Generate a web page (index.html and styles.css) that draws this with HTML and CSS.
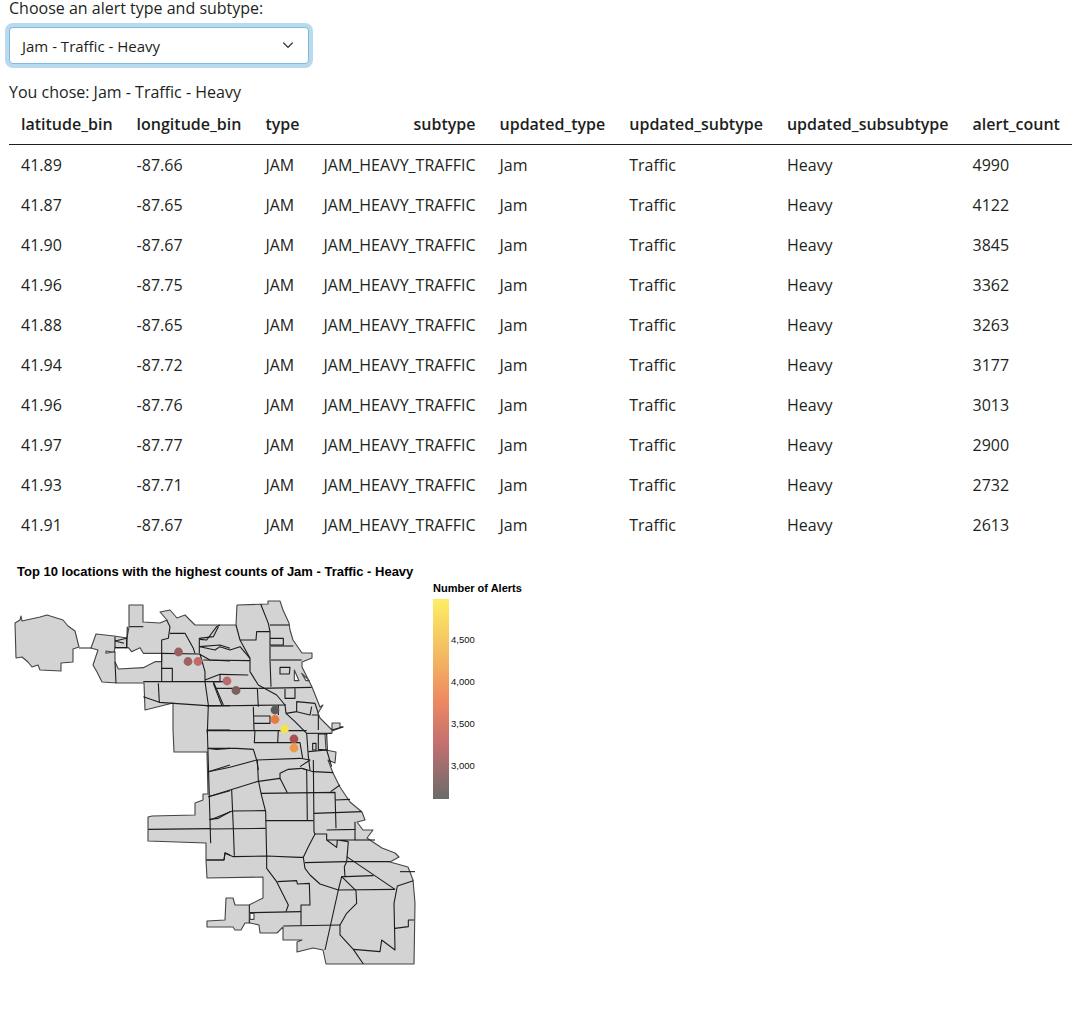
FILE: index.html
```html
<!DOCTYPE html>
<html lang="en">
<head>
<meta charset="utf-8">
<title>Alerts</title>
<link rel="stylesheet" href="styles.css">
</head>
<body>
<main class="page">
  <label class="field-label">Choose an alert type and subtype:</label>
  <div class="select">
    <span class="select-value">Jam - Traffic - Heavy</span>
    <svg class="chevron" width="10" height="7" viewBox="0 0 10 7"><path d="M.7 1 5 5.400 9.300 1"/></svg>
  </div>
  <p class="chosen">You chose: Jam - Traffic - Heavy</p>
  <table class="data">
    <thead>
      <tr><th>latitude_bin</th><th>longitude_bin</th><th>type</th><th class="right">subtype</th><th>updated_type</th><th>updated_subtype</th><th>updated_subsubtype</th><th>alert_count</th></tr>
    </thead>
    <tbody>
      <tr><td>41.89</td><td>-87.66</td><td>JAM</td><td>JAM_HEAVY_TRAFFIC</td><td>Jam</td><td>Traffic</td><td>Heavy</td><td>4990</td></tr>
      <tr><td>41.87</td><td>-87.65</td><td>JAM</td><td>JAM_HEAVY_TRAFFIC</td><td>Jam</td><td>Traffic</td><td>Heavy</td><td>4122</td></tr>
      <tr><td>41.90</td><td>-87.67</td><td>JAM</td><td>JAM_HEAVY_TRAFFIC</td><td>Jam</td><td>Traffic</td><td>Heavy</td><td>3845</td></tr>
      <tr><td>41.96</td><td>-87.75</td><td>JAM</td><td>JAM_HEAVY_TRAFFIC</td><td>Jam</td><td>Traffic</td><td>Heavy</td><td>3362</td></tr>
      <tr><td>41.88</td><td>-87.65</td><td>JAM</td><td>JAM_HEAVY_TRAFFIC</td><td>Jam</td><td>Traffic</td><td>Heavy</td><td>3263</td></tr>
      <tr><td>41.94</td><td>-87.72</td><td>JAM</td><td>JAM_HEAVY_TRAFFIC</td><td>Jam</td><td>Traffic</td><td>Heavy</td><td>3177</td></tr>
      <tr><td>41.96</td><td>-87.76</td><td>JAM</td><td>JAM_HEAVY_TRAFFIC</td><td>Jam</td><td>Traffic</td><td>Heavy</td><td>3013</td></tr>
      <tr><td>41.97</td><td>-87.77</td><td>JAM</td><td>JAM_HEAVY_TRAFFIC</td><td>Jam</td><td>Traffic</td><td>Heavy</td><td>2900</td></tr>
      <tr><td>41.93</td><td>-87.71</td><td>JAM</td><td>JAM_HEAVY_TRAFFIC</td><td>Jam</td><td>Traffic</td><td>Heavy</td><td>2732</td></tr>
      <tr><td>41.91</td><td>-87.67</td><td>JAM</td><td>JAM_HEAVY_TRAFFIC</td><td>Jam</td><td>Traffic</td><td>Heavy</td><td>2613</td></tr>
    </tbody>
  </table>
  <svg class="plot" width="530" height="430" viewBox="9 550 530 430">
    <defs>
      <linearGradient id="ramp" x1="0" y1="0" x2="0" y2="1">
        <stop offset="0" stop-color="#fdee65"/>
        <stop offset="0.25" stop-color="#f4bf62"/>
        <stop offset="0.5" stop-color="#ef8a62"/>
        <stop offset="0.72" stop-color="#c4706f"/>
        <stop offset="1" stop-color="#6b6b6b"/>
      </linearGradient>
    </defs>
    <text class="plot-title" x="17" y="576">Top 10 locations with the highest counts of Jam - Traffic - Heavy</text>

    <g class="map">
    <polygon class="area" points="15,623 20,620 21,616 22,621 40,617 47,615 63,620 68,626 75,631 79,647 73,649 73,662 61,663 61,671 40,670 38,665 32,667 28,662 22,657 16,658"/>
    <polyline class="edge" points="79,648 92,648"/>
    <polygon class="area" points="91,648 96,634 114,636 127,638 129,627 129,605 143,605 143,622 160,623 167,620 160,612 170,610 177,618 185,615 195,625 236,625 237,605 268,604 268,601 280,601 283,610 289,623 290,630 293,640 302,653 312,653 312,658 302,662 302,667 312,687 320,707 323,705 318,713 320,718 332,730 332,723 340,723 340,727 343,727 332,731 332,733 325,734 326,750 336,752 335,763 328,760 333,773 340,787 350,802 362,812 365,820 357,822 363,830 373,830 367,838 382,848 395,853 399,857 390,862 408,867 410,872 413,880 415,903 414,964 326,964 323,950 313,948 297,952 297,942 302,940 283,940 283,927 277,933 260,933 259,925 250,923 245,923 241,930 235,930 233,927 207,927 207,921 225,920 226,898 233,898 235,905 249,905 263,898 263,877 207,878 206,860 206,843 148,841 148,817 152,816 195,815 195,803 203,800 203,794 208,794 207,752 174,752 173,730 173,703 145,710 144,683 117,683 102,682 97,672 93,665 98,650"/>

    <g class="lines" transform="translate(0 555) scale(0.33333)">
      <polygon class="hole" points="318,295 345,290 345,320 355,342 430,338 465,320 485,320 485,295 430,295 420,278 395,290 385,278 345,278 342,292 318,288"/>
      <polyline points="388,215 430,215"/>
      <polyline points="382,215 380,280"/>
      <polyline points="345,245 345,278 380,278 380,250 345,258 372,265"/>
      <polyline points="345,320 348,385"/>
      <polyline points="500,195 510,215 505,250 485,255 485,380"/>
      <polyline points="510,235 530,235 555,235 580,280 585,295"/>
      <polyline points="598,295 598,250 640,245 655,215"/>
      <polyline points="598,275 660,270 690,280"/>
      <polyline points="485,295 598,297 630,315 690,318"/>
      <polyline points="600,297 615,350 615,380 625,450 622,535"/>
      <polyline points="485,340 517,340 517,380"/>
      <polyline points="430,380 690,380"/>
      <polyline points="430,425 478,442 620,452 690,452"/>
      <polyline points="475,385 478,442"/>
      <polyline points="620,525 690,525"/>
      <polyline points="640,385 665,450"/>
    </g>

    <g class="lines" transform="translate(200 590) scale(0.33333)">
      <polyline points="108,105 120,150 150,205 150,245 175,285 230,315 255,345 258,370 285,395 320,430 325,500 330,540"/>
      <polyline points="182,42 205,100 210,125 210,210 213,290"/>
      <polyline points="210,105 268,105"/>
      <polyline points="120,150 168,150 170,125 210,125"/>
      <polyline points="210,145 250,145 250,165 210,165"/>
      <polyline points="213,168 280,168"/>
      <polygon points="240,232 270,232 268,252 240,252"/>
      <polygon class="hole" points="283,240 297,272 283,272"/>
      <polygon class="hole" points="305,250 328,272 318,272"/>
      <polyline points="0,148 20,150 50,110 60,105"/>
      <polyline points="0,170 45,180 60,170 90,180 120,170 150,205"/>
      <polyline points="10,210 150,212"/>
      <polyline points="213,210 305,210"/>
      <polyline points="15,270 60,253 145,255"/>
      <polyline points="60,253 60,275 40,275 70,345"/>
      <polyline points="45,295 172,295 175,350"/>
      <polyline points="175,295 335,292"/>
      <polyline points="255,297 255,325 285,325 285,295"/>
      <polyline points="20,348 258,345"/>
      <polyline points="160,350 162,420"/>
      <polyline points="162,378 210,378 210,400 162,400"/>
      <polyline points="235,345 235,375"/>
      <polyline points="258,370 290,365 290,335 345,340 355,370"/>
      <polyline points="290,365 330,375 335,350"/>
      <polyline points="335,375 355,375 355,420"/>
      <polyline points="20,422 320,422"/>
      <polyline points="165,420 163,458 300,458 308,505"/>
      <polyline points="235,420 233,458"/>
      <polyline points="25,475 110,475 160,478 170,510 175,540"/>
      <polyline points="170,510 300,505 330,510 300,530"/>
      <polyline points="320,430 395,430"/>
      <polygon points="355,432 380,432 382,480 355,478"/>
      <polygon points="338,460 348,460 348,480 338,480"/>
      <polyline points="325,485 380,480 395,530"/>
      <polyline points="395,420 430,410"/>
    </g>

    <g class="lines" transform="translate(200 760) scale(0.33333)">
      <polyline points="25,35 90,22 170,0"/>
      <polyline points="172,0 175,60 183,100"/>
      <polyline points="25,110 170,65 240,55 262,98"/>
      <polyline points="240,55 240,40 265,28 305,25 320,30 322,180"/>
      <polyline points="340,0 342,215 345,222 325,260 310,292"/>
      <polyline points="305,25 340,35 400,38"/>
      <polyline points="183,100 405,97 408,205"/>
      <polyline points="342,160 485,155"/>
      <polyline points="405,120 450,118"/>
      <polyline points="392,95 420,75"/>
      <polyline points="197,182 340,182"/>
      <polyline points="183,100 197,155 200,290 200,325 230,365 265,435 258,455"/>
      <polyline points="95,90 100,205 103,287"/>
      <polyline points="30,180 97,153 197,152"/>
      <polyline points="30,207 197,205"/>
      <polyline points="18,300 72,300 75,280 100,290 200,288 300,292 310,292 315,325 330,345 360,372 415,390"/>
      <polyline points="315,308 438,305"/>
      <polyline points="380,210 465,208 465,185"/>
      <polyline points="465,208 465,240 380,240 410,262 412,240 445,245"/>
      <polyline points="345,222 380,222 380,240"/>
      <polyline points="465,240 525,240"/>
      <polyline points="445,245 440,305 433,320 435,350 425,350 415,390 375,570"/>
      <polyline points="440,290 585,388"/>
      <polyline points="440,305 570,305"/>
      <polyline points="435,350 520,347"/>
      <polyline points="425,350 468,392"/>
      <polyline points="415,390 585,388"/>
      <polyline points="468,392 470,430 440,460 420,495 420,525 460,568 490,612"/>
      <polyline points="460,568 540,575 545,540 585,570 582,430 592,378 640,362"/>
      <polyline points="585,505 625,500 625,480 642,480"/>
      <polyline points="600,335 645,335"/>
      <polyline points="232,365 290,362 292,372 328,370 330,435 303,435 303,495"/>
      <polyline points="150,458 303,455"/>
      <polyline points="148,435 148,490"/>
      <polyline points="250,498 420,495"/>
      <rect class="hole" x="150" y="460" width="12" height="18"/>
    </g>

    <g class="lines" transform="translate(0 730) scale(0.33333)">
      <polyline points="622,0 630,270 632,340"/>
      <polyline points="445,298 630,296"/>
      <polyline points="624,55 650,58 690,55"/>
      <polyline points="625,125 690,105"/>
      <polyline points="625,200 690,182"/>
      <polyline points="628,268 655,265 690,245"/>
      <polyline points="620,390 672,390 675,368 690,375"/>
    </g>

    <circle class="dot d1" cx="178.500" cy="652" r="4.400"/>
    <circle class="dot d2" cx="188" cy="661.500" r="4.400"/>
    <circle class="dot d3" cx="198" cy="661.500" r="4.400"/>
    <circle class="dot d4" cx="227" cy="681" r="4.400"/>
    <circle class="dot d5" cx="236" cy="690.500" r="4.400"/>
    <circle class="dot d6" cx="275" cy="710" r="4.400"/>
    <circle class="dot d7" cx="275" cy="719.500" r="4.400"/>
    <circle class="dot d8" cx="284.500" cy="729" r="4.400"/>
    <circle class="dot d9" cx="294" cy="739" r="4.400"/>
    <circle class="dot d10" cx="294" cy="748" r="4.400"/>
    </g>

    <text class="legend-title" x="433" y="592">Number of Alerts</text>
    <rect class="ramp" x="433" y="599" width="16" height="200"/>
    <text class="legend-label" x="451" y="642.500">4,500</text>
    <text class="legend-label" x="451" y="684.500">4,000</text>
    <text class="legend-label" x="451" y="726.500">3,500</text>
    <text class="legend-label" x="451" y="768.500">3,000</text>
  </svg>
</main>
</body>
</html>
```

FILE: styles.css
```css
html, body {
  margin: 0;
  padding: 0;
  background: #fff;
}

.page {
  margin-top: -4px;
  padding: 0 5px 0 9px;
  font-family: "Open Sans", sans-serif;
  font-size: 16px;
  line-height: 24px;
  color: #1d1f21;
}

.field-label {
  display: block;
}

.select {
  box-sizing: border-box;
  width: 300px;
  height: 37px;
  margin-top: 7px;
  padding: 0 15px 0 12px;
  display: flex;
  align-items: center;
  justify-content: space-between;
  background: #fff;
  border: 1px solid #86b7dd;
  border-radius: 4px;
  box-shadow: 0 0 0 4px #b9d9ef;
  font-size: 15px;
}

.chevron {
  fill: none;
  stroke: #343a40;
  stroke-width: 1.3;
  stroke-linecap: round;
  stroke-linejoin: round;
}

.chosen {
  margin: 16px 0 0;
}

.data {
  width: 1063px;
  border-collapse: collapse;
}

.data th {
  padding: 8px 12px;
  height: 24px;
  text-align: left;
  font-weight: 600;
  border-bottom: 1px solid #1d1f21;
  white-space: nowrap;
}

.data th.right {
  text-align: right;
}

.data td {
  padding: 8px 12px;
  height: 24px;
  white-space: nowrap;
}

.plot {
  display: block;
  margin-top: 5px;
}

.plot-title {
  font: bold 13px "Liberation Sans", sans-serif;
  fill: #000;
}

.legend-title {
  font: bold 11px "Liberation Sans", sans-serif;
  fill: #000;
}

.legend-label {
  font: 9.500px "Liberation Sans", sans-serif;
  fill: #111;
}

.ramp {
  fill: url(#ramp);
}

.map {
  filter: blur(0.3px);
}

.area {
  fill: #d3d3d3;
  stroke: #444;
  stroke-width: 1.1;
  stroke-linejoin: round;
}

.edge {
  fill: none;
  stroke: #333;
  stroke-width: 1.1;
}

.lines polyline,
.lines polygon,
.lines rect {
  fill: none;
  stroke: #1c1c1c;
  stroke-width: 3.3;
  stroke-linejoin: round;
}

.lines .hole {
  fill: #fff;
  stroke: #444;
}

.dot {
  stroke: none;
}

.d1 { fill: #96605f; }
.d2 { fill: #9c6361; }
.d3 { fill: #c4696a; }
.d4 { fill: #b96a6b; }
.d5 { fill: #7d5f5f; }
.d6 { fill: #5a5a5a; }
.d7 { fill: #e87b3b; }
.d8 { fill: #f5e34d; }
.d9 { fill: #a84f52; }
.d10 { fill: #ec9a4a; }
```
